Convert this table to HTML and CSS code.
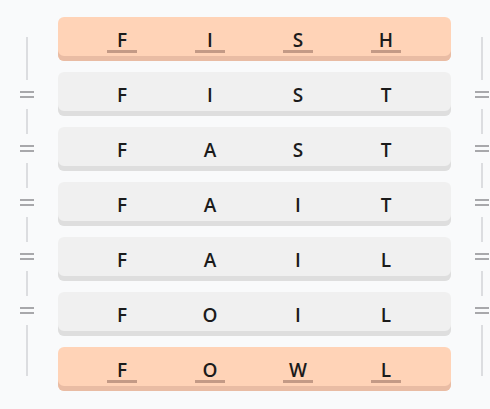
FILE: index.html
```html
<!DOCTYPE html>
<html lang="en">
<head>
<meta charset="utf-8">
<title>Word ladder</title>
<link rel="stylesheet" href="styles.css">
</head>
<body>
<div class="board">
  <div class="side">
    <div class="line first"></div>
    <div class="eq"></div>
    <div class="line"></div>
    <div class="eq"></div>
    <div class="line"></div>
    <div class="eq"></div>
    <div class="line"></div>
    <div class="eq"></div>
    <div class="line"></div>
    <div class="eq"></div>
    <div class="line last"></div>
  </div>
  <div class="rows">
    <div class="row fixed"><span class="cell">F</span><span class="cell">I</span><span class="cell">S</span><span class="cell">H</span></div>
    <div class="row"><span class="cell">F</span><span class="cell">I</span><span class="cell">S</span><span class="cell">T</span></div>
    <div class="row"><span class="cell">F</span><span class="cell">A</span><span class="cell">S</span><span class="cell">T</span></div>
    <div class="row"><span class="cell">F</span><span class="cell">A</span><span class="cell">I</span><span class="cell">T</span></div>
    <div class="row"><span class="cell">F</span><span class="cell">A</span><span class="cell">I</span><span class="cell">L</span></div>
    <div class="row"><span class="cell">F</span><span class="cell">O</span><span class="cell">I</span><span class="cell">L</span></div>
    <div class="row fixed"><span class="cell">F</span><span class="cell">O</span><span class="cell">W</span><span class="cell">L</span></div>
  </div>
  <div class="side">
    <div class="line first"></div>
    <div class="eq"></div>
    <div class="line"></div>
    <div class="eq"></div>
    <div class="line"></div>
    <div class="eq"></div>
    <div class="line"></div>
    <div class="eq"></div>
    <div class="line"></div>
    <div class="eq"></div>
    <div class="line last"></div>
  </div>
</div>
</body>
</html>
```
FILE: styles.css
```css
html, body {
  margin: 0;
  padding: 0;
  overflow: hidden;
  background: #f9fafb;
}

body {
  font-family: "Open Sans", "Noto Sans", sans-serif;
  color: #1b1b1b;
}

.board {
  display: grid;
  grid-template-columns: 54px 393px 54px;
  column-gap: 4px;
  padding-top: 17px;
  width: 513px;
}

.side {
  display: flex;
  flex-direction: column;
  align-items: center;
  gap: 11px;
  padding-top: 20px;
}

.line {
  width: 2px;
  height: 25px;
  background: #dcdde0;
}

.line.first {
  height: 43px;
}

.line.last {
  height: 51px;
}

.eq {
  width: 14px;
  height: 7px;
  box-sizing: border-box;
  border-top: 2px solid #a8a8ab;
  border-bottom: 2px solid #a8a8ab;
}

.rows {
  display: flex;
  flex-direction: column;
  gap: 11px;
}

.row {
  display: grid;
  grid-template-columns: repeat(4, 88px);
  padding: 0 20px;
  height: 44px;
  box-sizing: border-box;
  border-radius: 6px;
  background: #f0f0f0;
  box-shadow: inset 0 -5px 0 #dedede;
}

.row.fixed {
  background: #ffd3b7;
  box-shadow: inset 0 -5px 0 #e9bca4;
}

.cell {
  position: relative;
  display: flex;
  align-items: center;
  justify-content: center;
  height: 44px;
  padding-top: 2px;
  box-sizing: border-box;
  font-size: 19px;
  font-weight: 600;
  line-height: 1;
}

.fixed .cell::after {
  content: "";
  position: absolute;
  left: 29px;
  top: 33px;
  width: 30px;
  height: 3px;
  background: #c39a86;
}
```
